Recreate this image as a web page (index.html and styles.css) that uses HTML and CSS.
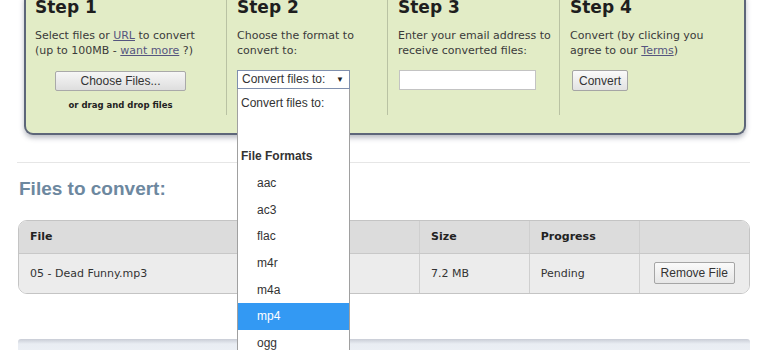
FILE: index.html
```html
<!DOCTYPE html>
<html lang="en">
<head>
    <meta charset="UTF-8">
    <title>Convert Files</title>
    <link rel="stylesheet" href="styles.css">
</head>
<body>
    <div class="steps-panel">
        <div class="step">
            <h2>Step 1</h2>
            <p>Select files or <a href="#">URL</a> to convert<br>(up to 100MB - <a href="#">want more</a> ?)</p>
            <div class="step-center">
                <button class="choose-btn">Choose Files...</button>
                <div class="drop-hint">or drag and drop files</div>
            </div>
        </div>
        <div class="step">
            <h2>Step 2</h2>
            <p>Choose the format to<br>convert to:</p>
            <div class="select-wrap">
                <div class="fake-select">Convert files to: <span class="arrow">&#9660;</span></div>
                <ul class="dropdown">
                    <li class="opt-top">Convert files to:</li>
                    <li></li>
                    <li class="group">File Formats</li>
                    <li>aac</li>
                    <li>ac3</li>
                    <li>flac</li>
                    <li>m4r</li>
                    <li>m4a</li>
                    <li class="selected">mp4</li>
                    <li>ogg</li>
                </ul>
            </div>
        </div>
        <div class="step">
            <h2>Step 3</h2>
            <p>Enter your email address to<br>receive converted files:</p>
            <input type="text" class="email-input">
        </div>
        <div class="step">
            <h2>Step 4</h2>
            <p>Convert (by clicking you<br>agree to our <a href="#">Terms</a>)</p>
            <button class="small-btn">Convert</button>
        </div>
    </div>

    <hr class="divider">

    <h3 class="files-title">Files to convert:</h3>

    <div class="files-table">
        <table>
            <tr>
                <th class="col-file">File</th>
                <th class="col-size">Size</th>
                <th class="col-progress">Progress</th>
                <th class="col-action"></th>
            </tr>
            <tr>
                <td>05 - Dead Funny.mp3</td>
                <td>7.2 MB</td>
                <td>Pending</td>
                <td class="action-cell"><button class="small-btn">Remove File</button></td>
            </tr>
        </table>
    </div>

    <div class="next-panel"></div>
</body>
</html>
```

FILE: styles.css
```css
* {
    margin: 0;
    padding: 0;
    box-sizing: border-box;
}

body {
    background: #fff;
    font-family: "DejaVu Sans", Verdana, sans-serif;
    color: #333;
    overflow: hidden;
}

a {
    color: #55557f;
}

.steps-panel {
    display: grid;
    grid-template-columns: 200px 161px 172px 1fr;
    margin: -4px 22px 0 24px;
    height: 139px;
    background: #e2ecc6;
    border: 2px solid #5d6679;
    border-top: none;
    border-radius: 0 0 9px 9px;
    box-shadow: 0 3px 5px rgba(60, 70, 90, 0.35);
    padding: 0 0 18px 0;
}

.step {
    padding: 0 8px 0 10px;
    border-left: 1px solid #b9c2a3;
    position: relative;
}

.step:first-child {
    border-left: none;
    padding-left: 9px;
}

.step h2 {
    font-size: 17px;
    font-weight: bold;
    color: #1e1e1e;
    line-height: 22px;
}

.step p {
    font-size: 11px;
    line-height: 15px;
    margin-top: 10px;
    color: #3a3a3a;
    height: 30px;
}

.step-center {
    text-align: center;
    margin-top: 12px;
    padding-right: 12px;
}

.choose-btn {
    width: 131px;
    height: 20px;
    font-family: "Liberation Sans", Arial, sans-serif;
    font-size: 12px;
    color: #333;
    background: linear-gradient(#f6f6f6, #dedede);
    border: 1px solid #a9a9a9;
    border-radius: 2px;
}

.drop-hint {
    font-size: 8.5px;
    font-weight: bold;
    color: #222;
    margin-top: 9px;
}

.select-wrap {
    position: relative;
    margin-top: 12px;
}

.fake-select {
    width: 113px;
    height: 19px;
    background: #fff;
    border: 1px solid #7f8fae;
    font-family: "Liberation Sans", Arial, sans-serif;
    font-size: 12px;
    line-height: 17px;
    padding-left: 4px;
    color: #333;
    position: relative;
}

.arrow {
    position: absolute;
    right: 5px;
    top: 0;
    font-size: 8px;
    color: #222;
}

.dropdown {
    list-style: none;
    position: absolute;
    top: 19px;
    left: 0;
    width: 113px;
    padding-top: 1px;
    background: #fff;
    border: 1px solid #a0a0a0;
    border-top: none;
    z-index: 10;
    font-family: "Liberation Sans", Arial, sans-serif;
    font-size: 12px;
    color: #333;
}

.dropdown li {
    height: 26.67px;
    line-height: 26.67px;
    padding-left: 19px;
}

.dropdown .opt-top,
.dropdown .group {
    padding-left: 3px;
}

.dropdown .group {
    font-weight: bold;
}

.dropdown .selected {
    background: #3399f3;
    color: #fff;
}

.email-input {
    display: block;
    margin-top: 12px;
    margin-left: 1px;
    width: 137px;
    height: 20px;
    border: 1px solid #c3c3c3;
    background: #fff;
}

.small-btn {
    font-family: "Liberation Sans", Arial, sans-serif;
    font-size: 12px;
    color: #333;
    height: 21px;
    padding: 0 6px;
    background: linear-gradient(#fafafa, #e2e2e2);
    border: 1px solid #a5a5a5;
    border-radius: 2px;
}

.step .small-btn {
    margin-top: 12px;
    margin-left: 2px;
}

.divider {
    border: none;
    border-top: 1px solid #e6e6e6;
    margin: 27px 18px 0 17px;
}

.files-title {
    font-family: "Liberation Sans", Arial, sans-serif;
    font-size: 19px;
    font-weight: bold;
    color: #6d889f;
    margin: 15px 0 0 19px;
    line-height: 22px;
}

.files-table {
    margin: 20px 18px 0 18px;
    border: 1px solid #c4c4c4;
    border-radius: 9px;
    overflow: hidden;
}

.files-table table {
    width: 100%;
    border-collapse: collapse;
    font-size: 11px;
    color: #333;
}

.files-table th {
    text-align: left;
    height: 32px;
    padding-left: 11px;
    background: #dcdcdc;
    border-bottom: 1px solid #c8c8c8;
    color: #222;
}

.files-table td {
    height: 40px;
    padding-left: 11px;
    background: #ececec;
}

.files-table th + th,
.files-table td + td {
    border-left: 1px solid #cfcfcf;
}

.col-file {
    width: 402px;
}

.col-size,
.col-progress,
.col-action {
    width: 110px;
}

.files-table .action-cell {
    padding: 0 11px 0 14px;
}

.action-cell .small-btn {
    background: linear-gradient(#fafafa, #e6e6e6);
    height: 22px;
}

.next-panel {
    margin: 45px 18px 0 18px;
    height: 30px;
    background: linear-gradient(#c9cdd6, #e9edf3 5px, #f1f4f8);
    border-radius: 3px;
}
```
